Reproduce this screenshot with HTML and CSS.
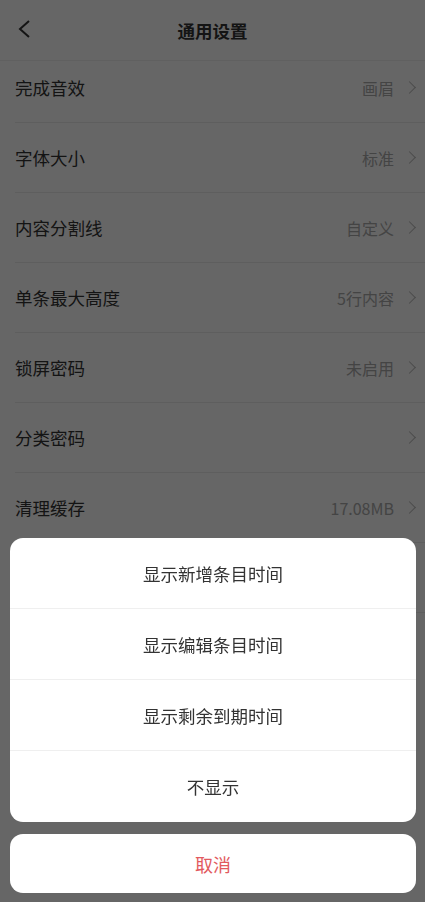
FILE: index.html
```html
<!DOCTYPE html>
<html lang="zh-CN">
<head>
    <meta charset="UTF-8">
    <meta name="viewport" content="width=device-width, initial-scale=1.0">
    <title>通用设置</title>
    <link rel="stylesheet" href="styles.css">
</head>
<body>
    <div class="page">
        <header class="top-bar">
            <span class="back">
                <svg width="14" height="20" viewBox="0 0 14 20"><path d="M12 2 L3 10 L12 18" fill="none" stroke="#333" stroke-width="2"/></svg>
            </span>
            <h1>通用设置</h1>
        </header>

        <ul class="settings-list">
            <li class="setting first"><span>完成音效</span><span class="value">画眉</span><i class="arrow"></i></li>
            <li class="setting"><span>字体大小</span><span class="value">标准</span><i class="arrow"></i></li>
            <li class="setting"><span>内容分割线</span><span class="value">自定义</span><i class="arrow"></i></li>
            <li class="setting"><span>单条最大高度</span><span class="value">5行内容</span><i class="arrow"></i></li>
            <li class="setting"><span>锁屏密码</span><span class="value">未启用</span><i class="arrow"></i></li>
            <li class="setting"><span>分类密码</span><span class="value"></span><i class="arrow"></i></li>
            <li class="setting"><span>清理缓存</span><span class="value">17.08MB</span><i class="arrow"></i></li>
            <li class="setting"><span>显示时间</span><span class="value">不显示</span><i class="arrow"></i></li>
        </ul>
    </div>

    <!-- Action sheet -->
    <div class="mask"></div>
    <div class="action-sheet">
        <div class="sheet-group">
            <div class="sheet-item">显示新增条目时间</div>
            <div class="sheet-item">显示编辑条目时间</div>
            <div class="sheet-item">显示剩余到期时间</div>
            <div class="sheet-item">不显示</div>
        </div>
        <div class="sheet-cancel">取消</div>
    </div>
</body>
</html>
```
FILE: styles.css
```css
/* General Body Styling */
* {
    box-sizing: border-box;
}

body {
    margin: 0;
    background: #fff;
    font-family: 'Noto Sans CJK SC', 'Noto Sans', sans-serif;
    color: #333;
    height: 902px;
    overflow: hidden;
}

/* Top Bar */
.top-bar {
    height: 61px;
    display: flex;
    align-items: center;
    justify-content: center;
    position: relative;
    border-bottom: 1px solid #f0f0f0;
}

.top-bar h1 {
    margin: 0;
    font-size: 17.5px;
    font-weight: bold;
    color: #333;
}

.back {
    position: absolute;
    left: 17px;
    top: 19px;
    display: flex;
}

/* Settings List */
.settings-list {
    list-style: none;
    margin: 0;
    padding: 0;
}

.setting {
    height: 70px;
    margin-left: 15px;
    padding-right: 9px;
    display: flex;
    align-items: center;
    border-bottom: 1px solid #ececec;
    font-size: 17.5px;
}

.setting.first {
    height: 62px;
    padding-bottom: 8px;
}

.setting span:first-child {
    flex: 1;
}

.setting .value {
    font-size: 16px;
    color: #aaa;
    margin-right: 11px;
}

.arrow {
    width: 9px;
    height: 9px;
    border-top: 1.5px solid #bbb;
    border-right: 1.5px solid #bbb;
    transform: rotate(45deg);
    margin-right: 2px;
}

/* Mask and Action Sheet */
.mask {
    position: fixed;
    inset: 0;
    background: rgba(0, 0, 0, 0.6);
}

.action-sheet {
    position: fixed;
    left: 10px;
    right: 9px;
    bottom: 9px;
    display: flex;
    flex-direction: column;
    gap: 12px;
}

.sheet-group {
    background: #fff;
    border-radius: 13px;
    overflow: hidden;
}

.sheet-item {
    height: 71px;
    display: flex;
    align-items: center;
    justify-content: center;
    font-size: 17.5px;
    color: #333;
    border-bottom: 1px solid #efefef;
}

.sheet-item:last-child {
    border-bottom: none;
}

.sheet-cancel {
    height: 59px;
    background: #fff;
    border-radius: 13px;
    display: flex;
    align-items: center;
    justify-content: center;
    font-size: 18px;
    color: #e25a5e;
}
```
